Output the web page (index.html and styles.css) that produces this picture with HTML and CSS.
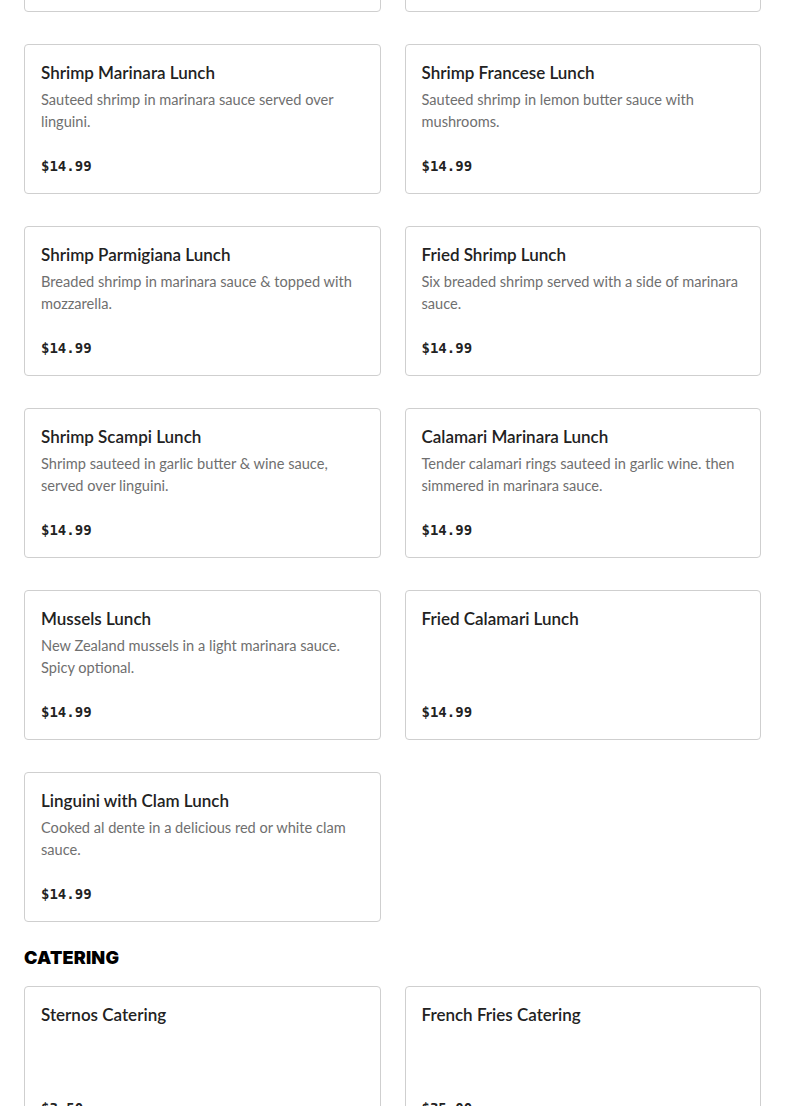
FILE: index.html
```html
<!DOCTYPE html>
<html>
<head>
<meta charset="utf-8">
<link rel="stylesheet" href="styles.css">
</head>
<body>
<main class="menu">
  <section class="section section-lunch">
    <div class="grid">
      <div class="card"></div>
      <div class="card"></div>
      <div class="card"><h3 class="title">Shrimp Marinara Lunch</h3><p class="desc">Sauteed shrimp in marinara sauce served over linguini.</p><div class="price">$14.99</div></div>
      <div class="card"><h3 class="title">Shrimp Francese Lunch</h3><p class="desc">Sauteed shrimp in lemon butter sauce with mushrooms.</p><div class="price">$14.99</div></div>
      <div class="card"><h3 class="title">Shrimp Parmigiana Lunch</h3><p class="desc">Breaded shrimp in marinara sauce &amp; topped with mozzarella.</p><div class="price">$14.99</div></div>
      <div class="card"><h3 class="title">Fried Shrimp Lunch</h3><p class="desc">Six breaded shrimp served with a side of marinara sauce.</p><div class="price">$14.99</div></div>
      <div class="card"><h3 class="title">Shrimp Scampi Lunch</h3><p class="desc">Shrimp sauteed in garlic butter &amp; wine sauce, served over linguini.</p><div class="price">$14.99</div></div>
      <div class="card"><h3 class="title">Calamari Marinara Lunch</h3><p class="desc">Tender calamari rings sauteed in garlic wine. then simmered in marinara sauce.</p><div class="price">$14.99</div></div>
      <div class="card"><h3 class="title">Mussels Lunch</h3><p class="desc">New Zealand mussels in a light marinara sauce. Spicy optional.</p><div class="price">$14.99</div></div>
      <div class="card"><h3 class="title">Fried Calamari Lunch</h3><p class="desc"></p><div class="price">$14.99</div></div>
      <div class="card"><h3 class="title">Linguini with Clam Lunch</h3><p class="desc">Cooked al dente in a delicious red or white clam sauce.</p><div class="price">$14.99</div></div>
    </div>
  </section>
  <section class="section">
    <h2 class="section-title">CATERING</h2>
    <div class="grid">
      <div class="card"><h3 class="title">Sternos Catering</h3><p class="desc"></p><div class="price">$3.50</div></div>
      <div class="card"><h3 class="title">French Fries Catering</h3><p class="desc"></p><div class="price">$35.00</div></div>
    </div>
  </section>
</main>
</body>
</html>
```
FILE: styles.css
```css
html, body {
  margin: 0;
  padding: 0;
  background: #fff;
}
body {
  font-family: Lato, "Liberation Sans", sans-serif;
  color: #1f1f1f;
  overflow: hidden;
  height: 1106px;
}
.menu {
  padding: 0 24px;
}
.section-lunch {
  margin-top: -138px;
}
.grid {
  display: grid;
  grid-template-columns: 1fr 1fr;
  column-gap: 24px;
  row-gap: 32px;
}
.card {
  border: 1px solid #cfcfcf;
  border-radius: 4px;
  padding: 16px;
  display: flex;
  flex-direction: column;
  min-height: 116px;
}
.title {
  margin: 0;
  font-size: 17px;
  font-weight: 600;
  line-height: 24px;
  color: #222;
}
.desc {
  margin: 4px 0 0;
  font-size: 14.6px;
  line-height: 22px;
  color: #6f6f6f;
  min-height: 44px;
}
.price {
  margin-top: 22px;
  font-family: "DejaVu Sans Mono", "Liberation Mono", monospace;
  font-weight: bold;
  font-size: 14px;
  line-height: 22px;
  color: #222;
}
.section-title {
  margin: 24px 0 16px;
  font-family: Inter, "Liberation Sans", sans-serif;
  font-size: 18px;
  font-weight: 900;
  line-height: 24px;
  color: #000;
  letter-spacing: 0.2px;
}
```
